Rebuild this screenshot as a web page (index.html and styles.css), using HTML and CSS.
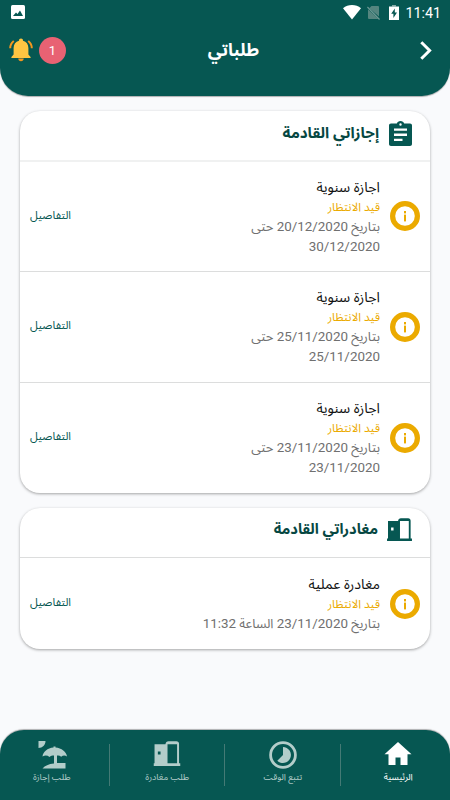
FILE: index.html
```html
<!DOCTYPE html>
<html lang="ar" dir="rtl">
<head>
    <meta charset="UTF-8">
    <meta name="viewport" content="width=device-width, initial-scale=1.0">
    <title>طلباتي</title>
    <link rel="stylesheet" href="styles.css">
</head>
<body>
    <!-- Shared icons -->
    <svg class="sprite" width="0" height="0">
        <symbol id="icon-info" viewBox="0 0 30 30">
            <circle cx="15" cy="15" r="12.4" fill="none" stroke="#ebaa00" stroke-width="5.2"/>
            <rect x="14" y="10" width="2" height="2.4" fill="#ebaa00"/>
            <rect x="14" y="13.6" width="2" height="6.8" fill="#ebaa00"/>
        </symbol>
        <symbol id="icon-door" viewBox="0 0 26 24">
            <path fill="currentColor" fill-rule="evenodd" d="M1 3h10.5c.3-1.700 1.300-2.800 3-2.800h7.500c1.700 0 2.600 1.100 2.600 2.600v18.700h1.400v2.500H0v-2.500h1zM13.500 3v18.500h9.200V3zM4.200 10v3h2.600v-3z"/>
        </symbol>
    </svg>

    <div class="app">
        <header class="header">
            <div class="status-bar" dir="ltr">
                <svg class="picture-icon" width="14" height="14" viewBox="0 0 14 14">
                    <rect width="14" height="14" rx="1.500" fill="#fff"/>
                    <path fill="#065752" d="M2 11l3-3.500 1.500 1.500 2.500-3.500 3 5.500z"/>
                </svg>
                <div class="status-icons">
                    <svg width="18" height="15" viewBox="0 0 18 15">
                        <path fill="#fff" d="M0 3.200C5-1 13-1 18 3.200L9 14.600z"/>
                    </svg>
                    <svg class="sim-icon" width="13" height="15" viewBox="0 0 13 15">
                        <path fill="#55857f" d="M4.500 1H11a1 1 0 0 1 1 1v9.500L2.200 3.300zM1 4.300L11.300 14H2a1 1 0 0 1-1-1z"/>
                        <path stroke="#6d9994" stroke-width="1.200" d="M.4 2L12.500 14.500"/>
                    </svg>
                    <svg class="battery-icon" width="10" height="15" viewBox="0 0 10 15">
                        <path fill="#86aaa7" d="M3 0h4v1.500H3z"/>
                        <path fill="#fff" d="M0 1.500h10V15H0z"/>
                        <path fill="#065752" d="M5.800 3.500L2.200 8.800h2.200V13l3.600-5.500H5.800z"/>
                    </svg>
                    <span class="clock">11:41</span>
                </div>
            </div>
            <div class="title-bar">
                <svg class="back-icon" width="12" height="19" viewBox="0 0 12 19">
                    <path fill="none" stroke="#fff" stroke-width="3" d="M1.300 1.300l8.300 8.200-8.300 8.200"/>
                </svg>
                <h1>طلباتي</h1>
                <div class="alerts">
                    <span class="badge">1</span>
                    <svg width="24" height="24" viewBox="0 0 24 24">
                        <path fill="#f5961d" d="M9.300 20.500h5.400c0 1.700-1.200 2.800-2.700 2.800s-2.700-1.100-2.700-2.800z"/>
                        <path fill="none" stroke="#f5961d" stroke-width="2" d="M1.200 10.300c0-3 1.200-5.400 3.600-7.300M22.800 10.300c0-3-1.200-5.400-3.600-7.300"/>
                        <path fill="#ffc542" d="M12 .5c1.300 0 2 .9 2 2.200 3.400.9 5.400 3.600 5.400 7.300v6.500l2.200 2.500v1H2.400v-1l2.200-2.500V10c0-3.700 2-6.400 5.400-7.300 0-1.300.7-2.200 2-2.200z"/>
                    </svg>
                </div>
            </div>
        </header>

        <main class="content">
            <section class="card">
                <div class="card-header leaves">
                    <svg class="clipboard-icon" width="23" height="25" viewBox="0 0 23 25">
                        <path fill="#065752" fill-rule="evenodd" d="M2 2.500h5.800C8.300 1 9.700 0 11.500 0s3.200 1 3.700 2.500H21c1.200 0 2 .8 2 2V23c0 1.200-.8 2-2 2H2c-1.200 0-2-.8-2-2V4.500c0-1.200.8-2 2-2zM5 7.500v2.300h13V7.500zM5 12.600v2.300h13v-2.300zM5 17.700V20h8.500v-2.300zM11.500 2.300a1.200 1.200 0 1 0 0 2.400 1.200 1.200 0 0 0 0-2.400z"/>
                    </svg>
                    <h2>إجازاتي القادمة</h2>
                </div>
                <div class="request">
                    <svg class="info-icon" width="30" height="30"><use href="#icon-info"/></svg>
                    <div class="request-info">
                        <div class="name">اجازة سنوية</div>
                        <div class="state">قيد الانتظار</div>
                        <div class="date">بتاريخ <bdi>20/12/2020</bdi> حتى<br><bdi>30/12/2020</bdi></div>
                    </div>
                    <a href="#" class="details">التفاصيل</a>
                </div>
                <div class="request">
                    <svg class="info-icon" width="30" height="30"><use href="#icon-info"/></svg>
                    <div class="request-info">
                        <div class="name">اجازة سنوية</div>
                        <div class="state">قيد الانتظار</div>
                        <div class="date">بتاريخ <bdi>25/11/2020</bdi> حتى<br><bdi>25/11/2020</bdi></div>
                    </div>
                    <a href="#" class="details">التفاصيل</a>
                </div>
                <div class="request">
                    <svg class="info-icon" width="30" height="30"><use href="#icon-info"/></svg>
                    <div class="request-info">
                        <div class="name">اجازة سنوية</div>
                        <div class="state">قيد الانتظار</div>
                        <div class="date">بتاريخ <bdi>23/11/2020</bdi> حتى<br><bdi>23/11/2020</bdi></div>
                    </div>
                    <a href="#" class="details">التفاصيل</a>
                </div>
            </section>

            <section class="card">
                <div class="card-header">
                    <svg class="door-icon" width="25" height="23"><use href="#icon-door"/></svg>
                    <h2 class="small">مغادراتي القادمة</h2>
                </div>
                <div class="request short">
                    <svg class="info-icon" width="30" height="30"><use href="#icon-info"/></svg>
                    <div class="request-info">
                        <div class="name">مغادرة عملية</div>
                        <div class="state">قيد الانتظار</div>
                        <div class="date">بتاريخ <bdi>23/11/2020</bdi> الساعة <bdi>11:32</bdi></div>
                    </div>
                    <a href="#" class="details">التفاصيل</a>
                </div>
            </section>
        </main>

        <nav class="bottom-nav">
            <div class="nav-items">
                <a href="#" class="nav-item active">
                    <svg width="28" height="28" viewBox="0 0 28 28">
                        <path fill="currentColor" d="M14 1L.5 13.300h4V24h7v-7.500h5V24h7V13.300h4z"/>
                    </svg>
                    <span>الرئيسية</span>
                </a>
                <a href="#" class="nav-item">
                    <svg width="28" height="28" viewBox="0 0 28 28">
                        <circle cx="14" cy="14" r="12.400" fill="none" stroke="currentColor" stroke-width="2.800"/>
                        <path fill="currentColor" d="M14 6a8 8 0 1 1-5.700 13.700L14 14z"/>
                    </svg>
                    <span>تتبع الوقت</span>
                </a>
                <a href="#" class="nav-item">
                    <svg width="28" height="28" viewBox="0 0 28 28"><use href="#icon-door" x=".5" y="0" width="27" height="25"/></svg>
                    <span>طلب مغادرة</span>
                </a>
                <a href="#" class="nav-item">
                    <svg width="30" height="28" viewBox="0 0 30 28">
                        <path fill="currentColor" d="M1.500 0H8.500c0 4-3 7-7 7zM5.500 15.500C6 10.500 10.500 7 16.500 6.400v-1h2v1C24.500 7 29.500 10.500 30 15.500c-2-1.300-4-1.300-5.800.3-1.300-1.200-2.800-1.500-4.200-1.200V22H28.500v5.500H5.500c2.500-2.800 6-4.500 11.500-5v-8c-1.800 0-3.300.3-4.500 1.500-2.300-1.800-4.500-1.800-7-.5z"/>
                    </svg>
                    <span>طلب إجازة</span>
                </a>
            </div>
        </nav>
    </div>
</body>
</html>
```
FILE: styles.css
```css
* {
    margin: 0;
    padding: 0;
    box-sizing: border-box;
}

body {
    font-family: Roboto, "Noto Sans Arabic", sans-serif;
    background: #f9fafc;
    color: #111;
}

a {
    text-decoration: none;
}

svg {
    display: block;
    flex-shrink: 0;
}

.sprite {
    position: absolute;
}

.app {
    display: flex;
    flex-direction: column;
    height: 800px;
    overflow: hidden;
}

/* Header */
.header {
    height: 96px;
    background: #065752;
    color: white;
    border-radius: 0 0 28px 28px;
    box-shadow: 0 1px 1px rgba(0, 0, 0, 0.3);
}

.status-bar {
    display: flex;
    justify-content: space-between;
    height: 24px;
    padding: 5px 9px 0 11px;
}

.status-icons {
    display: flex;
    align-items: flex-start;
}

.sim-icon {
    margin-left: 6px;
}

.battery-icon {
    margin-left: 9px;
}

.clock {
    margin-left: 6px;
    font-size: 14.3px;
    line-height: 16px;
}

.title-bar {
    display: grid;
    grid-template-columns: 1fr auto 1fr;
    align-items: center;
    height: 52px;
    padding: 0 18px 0 9px;
}

h1 {
    margin-left: 26px;
    font-size: 17.5px;
    font-weight: bold;
    line-height: 30px;
}

.alerts {
    display: flex;
    align-items: center;
    justify-content: flex-end;
    gap: 6px;
}

.badge {
    width: 27px;
    height: 27px;
    border-radius: 50%;
    background: #e86273;
    font-size: 13px;
    line-height: 27px;
    text-align: center;
}

/* Cards */
.content {
    flex: 1;
    display: flex;
    flex-direction: column;
    gap: 15.5px;
    padding: 15px 20px 0;
}

.card {
    background: white;
    border-radius: 20px;
    box-shadow: 0 1px 3px rgba(0, 0, 0, 0.35);
}

.card-header {
    display: flex;
    height: 50px;
    padding: 10px 18px 0;
    color: #065752;
    border-bottom: 1px solid #dcdddd;
}

.card-header.leaves {
    height: 50.5px;
    border-bottom: 2px solid #f0f1f1;
}

.clipboard-icon {
    margin-left: 10px;
}

.door-icon {
    margin-left: 9px;
}

h2 {
    font-size: 15.2px;
    font-weight: bold;
    line-height: 24px;
    color: #064742;
}

h2.small {
    font-size: 14.7px;
    line-height: 22px;
}

.request {
    display: flex;
    align-items: center;
    height: 110.5px;
    padding: 0 10px;
    border-bottom: 1px solid #dcdddd;
}

.request:last-child {
    height: 110px;
    border-bottom: none;
}

.request.short:last-child {
    height: 91px;
}

.request-info {
    flex: 1;
    margin-right: 10px;
    padding-top: 1px;
}

.request.short .request-info {
    padding-top: 0;
}

.name {
    font-size: 14.2px;
    line-height: 21px;
}

.state {
    font-size: 11.8px;
    line-height: 19px;
    color: #ebaa00;
}

.date {
    font-size: 13px;
    line-height: 20px;
    color: #707070;
}

.date bdi {
    font-size: 13.4px;
}

.details {
    padding-bottom: 1px;
    font-size: 11.2px;
    line-height: 20px;
    color: #065752;
}

/* Bottom navigation */
.bottom-nav {
    height: 70px;
    padding-top: 11px;
    background: #065752;
    border-radius: 24px 24px 0 0;
    box-shadow: 0 -1px 1px rgba(0, 0, 0, 0.3);
}

.nav-items {
    display: flex;
    margin: 0 -6px;
}

.nav-item {
    flex: 1;
    display: flex;
    flex-direction: column;
    align-items: center;
    height: 45px;
    color: #b3cdca;
    font-size: 9px;
    line-height: 16px;
}

.nav-item + .nav-item {
    background: linear-gradient(#447a75, #447a75) no-repeat right 3px;
    background-size: 1px 42px;
}

.nav-item.active {
    color: white;
}
```
